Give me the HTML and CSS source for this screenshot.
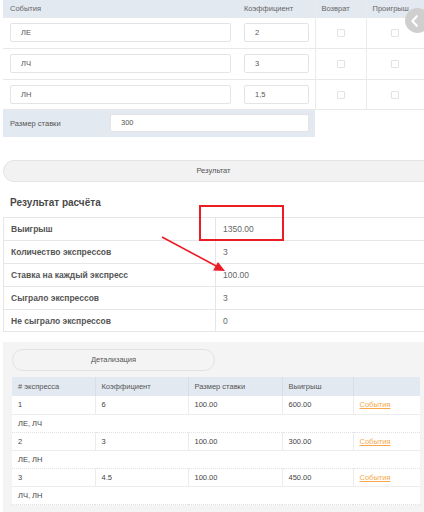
FILE: index.html
```html
<!DOCTYPE html>
<html lang="ru">
<head>
<meta charset="utf-8">
<title>Экспрессы</title>
<link rel="stylesheet" href="styles.css">
</head>
<body>
<div class="page">
  <table class="events">
    <colgroup><col class="c1"><col class="c2"><col class="c3"><col class="c4"></colgroup>
    <thead>
      <tr><th>События</th><th>Коэффициент</th><th class="bl">Возврат</th><th class="bl">Проигрыш</th></tr>
    </thead>
    <tbody>
      <tr><td><div class="inp">ЛЕ</div></td><td><div class="inp">2</div></td><td class="bl"><span class="cb"></span></td><td class="bl"><span class="cb"></span></td></tr>
      <tr><td><div class="inp">ЛЧ</div></td><td><div class="inp">3</div></td><td class="bl"><span class="cb"></span></td><td class="bl"><span class="cb"></span></td></tr>
      <tr><td><div class="inp">ЛН</div></td><td><div class="inp">1,5</div></td><td class="bl"><span class="cb"></span></td><td class="bl"><span class="cb"></span></td></tr>
      <tr class="size"><td colspan="2"><div class="size-row"><span class="size-label">Размер ставки</span><div class="inp wide">300</div></div></td><td class="blank"></td><td class="blank"></td></tr>
    </tbody>
  </table>

  <div class="btn result-btn">Результат</div>

  <h2 class="title">Результат расчёта</h2>
  <table class="results">
    <tr><th>Выигрыш</th><td>1350.00</td></tr>
    <tr><th>Количество экспрессов</th><td>3</td></tr>
    <tr><th>Ставка на каждый экспресс</th><td>100.00</td></tr>
    <tr><th>Сыграло экспрессов</th><td>3</td></tr>
    <tr><th>Не сыграло экспрессов</th><td>0</td></tr>
  </table>

  <div class="detail">
    <div class="btn detail-btn">Детализация</div>
    <table class="dtable">
      <colgroup><col class="d1"><col class="d2"><col class="d3"><col class="d4"><col class="d5"></colgroup>
      <thead><tr><th># экспресса</th><th>Коэффициент</th><th>Размер ставки</th><th>Выигрыш</th><th></th></tr></thead>
      <tbody>
        <tr><td>1</td><td>6</td><td>100.00</td><td>600.00</td><td><a class="link" href="#">События</a></td></tr>
        <tr class="ev"><td colspan="5">ЛЕ, ЛЧ</td></tr>
        <tr><td>2</td><td>3</td><td>100.00</td><td>300.00</td><td><a class="link" href="#">События</a></td></tr>
        <tr class="ev"><td colspan="5">ЛЕ, ЛН</td></tr>
        <tr><td>3</td><td>4.5</td><td>100.00</td><td>450.00</td><td><a class="link" href="#">События</a></td></tr>
        <tr class="ev"><td colspan="5">ЛЧ, ЛН</td></tr>
      </tbody>
    </table>
  </div>

  <div class="back-circle"><svg width="24" height="24" viewBox="0 0 24 24"><path d="M13.5 6.5 L8.5 12 L13.5 17.5" fill="none" stroke="#fff" stroke-width="2.4" stroke-linecap="round" stroke-linejoin="round"/></svg></div>
  <div class="highlight"></div>
  <svg class="arrow" width="70" height="40" viewBox="0 0 70 40"><line x1="2" y1="2" x2="58" y2="32" stroke="#ec1c24" stroke-width="1.6"/><polygon points="65,36 53,35.5 58,27" fill="#ec1c24"/></svg>
</div>
</body>
</html>
```

FILE: styles.css
```css
* { box-sizing: border-box; }
html, body { margin: 0; padding: 0; background: #fff; }
body { font-family: "Liberation Sans", Arial, sans-serif; color: #444; overflow: hidden; }
.page { position: relative; width: 424px; height: 512px; padding-left: 3px; overflow: hidden; }

table { border-collapse: collapse; table-layout: fixed; }

.events { width: 421px; font-size: 7.5px; }
.events col.c1 { width: 234px; }
.events col.c2 { width: 78px; }
.events col.c3 { width: 51px; }
.events col.c4 { width: 58px; }
.events th { background: #e3e9f1; height: 17px; font-weight: normal; text-align: left; color: #666; padding: 0 0 0 7px; }
.events th.bl { padding-left: 6px; }
.events td { border-top: 1px solid #e8e8e8; height: 31px; padding: 0 6px 0 7px; vertical-align: middle; }
.events .bl { border-left: 1px solid #ebebeb; }
.events td.bl { text-align: center; padding: 0; }
.events tbody tr:nth-child(3) td { height: 30px; }
.inp { height: 19px; border: 1px solid #e4e4e4; border-radius: 2px; background: #fff; padding-left: 10px; line-height: 17px; color: #555; font-size: 7.5px; }
.cb { display: inline-block; width: 8px; height: 8px; border: 1px solid #e2e2e2; border-radius: 1px; vertical-align: middle; }
.events tr.size td { background: #e3e9f1; height: 28px; border-top: 1px solid #e8e8e8; }
.events tr.size td.blank { background: #fff; border-left: 0; }
.size-row { display: flex; align-items: center; }
.size-label { width: 100px; color: #555; }
.inp.wide { flex: 1; height: 18px; line-height: 16px; margin-right: 0; }

.btn { background: #f2f2f2; border: 1px solid #e4e4e4; border-radius: 11px; text-align: center; font-size: 7.5px; color: #555; }
.result-btn { margin-top: 23px; height: 22px; line-height: 20px; width: 440px; padding-right: 19px; }

.title { margin: 0; padding: 14px 0 0 7px; height: 35px; font-size: 10px; font-weight: bold; color: #4a4a4a; line-height: 14px; }

.results { width: 421px; font-size: 8.5px; border-top: 1px solid #e6e6e6; border-bottom: 1px solid #e6e6e6; border-left: 1px solid #e6e6e6; }
.results th { width: 212px; text-align: left; font-weight: bold; color: #555; padding-left: 7px; height: 23px; border-bottom: 1px solid #e6e6e6; border-right: 1px solid #e6e6e6; }
.results td { color: #666; padding-left: 7px; border-bottom: 1px solid #e6e6e6; font-size: 8.5px; }
.results tr:last-child th, .results tr:last-child td { border-bottom: 0; height: 22px; }

.detail { margin-top: 10px; background: #f4f4f4; padding: 7px 4px 0 9px; height: 180px; width: 425px; }
.detail-btn { width: 203px; height: 22px; line-height: 20px; background: #f4f4f4; border-color: #e2e2e2; }
.dtable { margin-top: 6px; width: 408px; font-size: 7.5px; background: #fff; }
.dtable col.d1 { width: 83px; }
.dtable col.d2 { width: 93px; }
.dtable col.d3 { width: 94px; }
.dtable col.d4 { width: 71px; }
.dtable col.d5 { width: 67px; }
.dtable th { background: #e3e9f1; height: 19px; font-weight: normal; text-align: left; color: #555; padding-left: 6px; border-left: 1px solid #d8dee6; }
.dtable th:first-child { border-left: 0; }
.dtable td { height: 18px; padding-left: 6px; color: #444; border-left: 1px solid #ececec; border-bottom: 1px solid #ececec; }
.dtable td:first-child { border-left: 0; }
.dtable tr.ev td { border-bottom: 1px dotted #e0e0e0; }
.link { color: #f7a84a; text-decoration: underline; }

.back-circle { position: absolute; left: 405px; top: 8px; width: 25px; height: 25px; border-radius: 50%; background: #cfcfcf; display: flex; align-items: center; justify-content: center; padding-right: 4px; }
.highlight { position: absolute; left: 199px; top: 205px; width: 85px; height: 36px; border: 2px solid #ec1c24; }
.arrow { position: absolute; left: 160px; top: 235px; }
```
